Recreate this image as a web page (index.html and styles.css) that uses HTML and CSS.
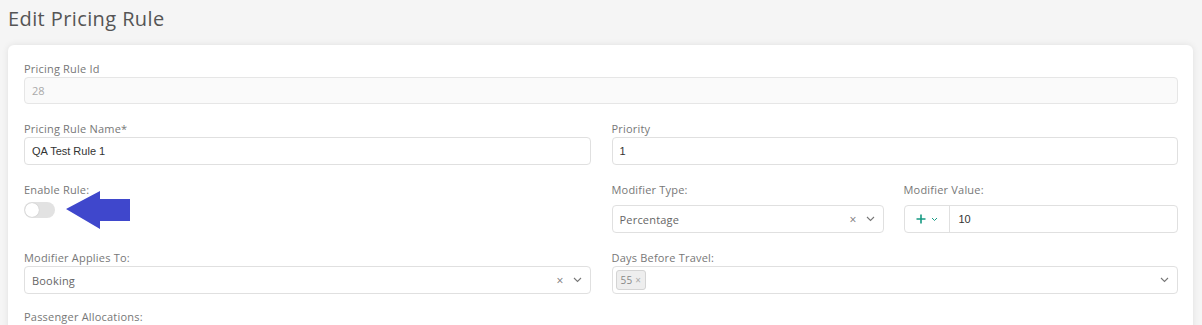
FILE: index.html
```html
<html>

<head>
    <title>Edit Pricing Rule</title>

    <link rel="stylesheet" href="styles.css">
</head>

<body>
    <h1 class="page-title">Edit Pricing Rule</h1>

    <div class="card">
        <div class="field">
            <label class="field-label">Pricing Rule Id</label>
            <div class="input input-disabled">28</div>
        </div>

        <div class="row">
            <div class="field">
                <label class="field-label">Pricing Rule Name*</label>
                <div class="input input-text">QA Test Rule 1</div>
            </div>
            <div class="field">
                <label class="field-label">Priority</label>
                <div class="input input-text">1</div>
            </div>
        </div>

        <div class="row">
            <div class="field">
                <label class="field-label">Enable Rule:</label>
                <span class="toggle"><span class="toggle-knob"></span></span>

                <!-- annotation arrow -->
                <svg class="callout" width="66" height="40" viewBox="0 0 66 40">
                    <polygon points="0,18 34,0 34,8 64,8 64,30 34,30 34,38" fill="#3f47cc" />
                </svg>
            </div>
            <div class="split">
                <div class="field">
                    <label class="field-label spaced">Modifier Type:</label>
                    <div class="select">
                        <span class="select-value">Percentage</span>
                        <span class="select-clear">&times;</span>
                        <svg class="chevron" width="9" height="6" viewBox="0 0 9 6">
                            <path d="M1 1l3.5 3.5L8 1" fill="none" stroke="#777" stroke-width="1.1" />
                        </svg>
                    </div>
                </div>
                <div class="field">
                    <label class="field-label spaced">Modifier Value:</label>
                    <div class="group">
                        <span class="addon">
                            <svg width="10" height="10" viewBox="0 0 10 10">
                                <path d="M5 0.5v9M0.5 5h9" fill="none" stroke="#169a82" stroke-width="1.6" />
                            </svg>
                            <svg width="7" height="5" viewBox="0 0 7 5">
                                <path d="M1 1l2.5 2.5L6 1" fill="none" stroke="#1a9c86" stroke-width="1" />
                            </svg>
                        </span>
                        <span class="group-value">10</span>
                    </div>
                </div>
            </div>
        </div>

        <div class="row">
            <div class="field">
                <label class="field-label">Modifier Applies To:</label>
                <div class="select">
                    <span class="select-value">Booking</span>
                    <span class="select-clear">&times;</span>
                    <svg class="chevron" width="9" height="6" viewBox="0 0 9 6">
                        <path d="M1 1l3.5 3.5L8 1" fill="none" stroke="#777" stroke-width="1.1" />
                    </svg>
                </div>
            </div>
            <div class="field">
                <label class="field-label">Days Before Travel:</label>
                <div class="select multi">
                    <span class="tag">55 <span class="tag-x">&times;</span></span>
                    <span class="select-value"></span>
                    <svg class="chevron" width="9" height="6" viewBox="0 0 9 6">
                        <path d="M1 1l3.5 3.5L8 1" fill="none" stroke="#777" stroke-width="1.1" />
                    </svg>
                </div>
            </div>
        </div>

        <div class="field last">
            <label class="field-label">Passenger Allocations:</label>
        </div>
    </div>
</body>

</html>
```

FILE: styles.css
```css
body {
    margin: 0;
    background-color: #f5f5f5;
    font-family: "Open Sans", "DejaVu Sans", sans-serif;
    color: #555;
    overflow: hidden;
}

.page-title {
    margin: 0;
    padding: 5px 8px 0;
    height: 40px;
    font-size: 20px;
    font-weight: 400;
    letter-spacing: 0.4px;
    color: #555;
}

.card {
    margin: 0 9px 0 8px;
    padding: 17px 15px 20px 16px;
    background-color: #fff;
    border-radius: 6px;
    box-shadow: 0 0 7px rgba(0, 0, 0, 0.09);
    height: 300px;
}

.row {
    display: grid;
    grid-template-columns: 1fr 1fr;
    column-gap: 21px;
    margin-top: 18px;
}

.split {
    display: grid;
    grid-template-columns: 272px 1fr;
    column-gap: 20px;
}

.field {
    position: relative;
}

.field.last {
    margin-top: 16px;
}

.field-label {
    display: block;
    height: 14px;
    margin-bottom: 1px;
    font-size: 11px;
    line-height: 14px;
    letter-spacing: 0.2px;
    color: #777;
}

.field-label.spaced {
    margin-bottom: 8px;
}

.input {
    box-sizing: border-box;
    height: 28px;
    padding: 0 7px;
    border: 1px solid #e0e0e0;
    border-radius: 4px;
    font-size: 11px;
    line-height: 26px;
}

.input-disabled {
    height: 27px;
    background-color: #fafafa;
    color: #aaa;
    border-color: #e6e6e6;
    line-height: 25px;
}

.input-text {
    font-family: "Liberation Sans", Arial, sans-serif;
    color: #333;
}

.toggle {
    display: block;
    width: 31px;
    height: 16px;
    margin-top: 5px;
    border-radius: 8px;
    background-color: #e2e2e2;
    position: relative;
}

.toggle-knob {
    position: absolute;
    left: 1px;
    top: 1px;
    width: 14px;
    height: 14px;
    border-radius: 50%;
    background-color: #fff;
    box-shadow: 0 0 1px rgba(0, 0, 0, 0.25);
}

.callout {
    position: absolute;
    left: 42px;
    top: 8px;
}

.select {
    box-sizing: border-box;
    height: 28px;
    display: flex;
    align-items: center;
    padding: 0 8px 0 7px;
    border: 1px solid #e0e0e0;
    border-radius: 4px;
    font-size: 11px;
    letter-spacing: 0.2px;
    color: #666;
}

.select-value {
    flex: 1;
}

.select-clear {
    font-size: 12px;
    color: #777;
    margin-right: 9px;
}

.chevron {
    display: block;
}

.multi {
    padding-left: 3px;
}

.tag {
    box-sizing: border-box;
    height: 20px;
    padding: 0 4px;
    border: 1px solid #d4d4d4;
    border-radius: 3px;
    background-color: #eee;
    font-size: 10px;
    line-height: 18px;
    color: #888;
}

.tag-x {
    color: #aaa;
}

.group {
    box-sizing: border-box;
    height: 28px;
    display: flex;
    border: 1px solid #e0e0e0;
    border-radius: 4px;
}

.addon {
    width: 44px;
    display: flex;
    align-items: center;
    justify-content: center;
    gap: 5px;
    border-right: 1px solid #e0e0e0;
}

.group-value {
    padding-left: 9px;
    font-family: "Liberation Sans", Arial, sans-serif;
    font-size: 11px;
    line-height: 26px;
    color: #333;
}
```
